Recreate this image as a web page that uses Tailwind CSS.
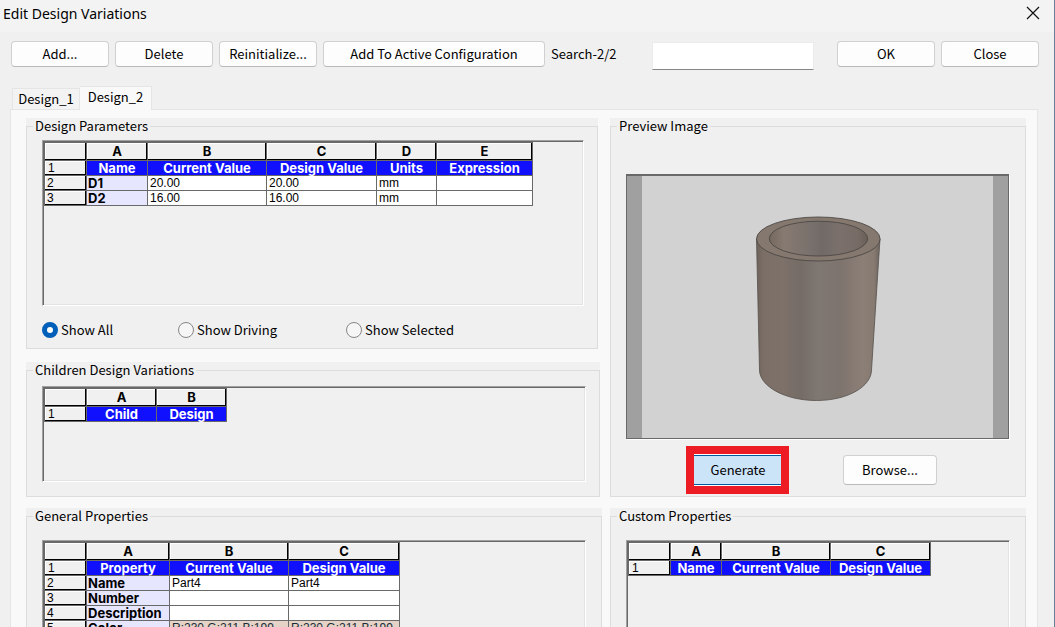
<!DOCTYPE html>
<html lang="en">
<head>
  <meta charset="UTF-8">
  <meta name="viewport" content="width=device-width, initial-scale=1.0">
  <title>Edit Design Variations</title>
  <script src="https://cdn.jsdelivr.net/npm/@tailwindcss/browser@4"></script>
</head>
<body class="bg-[#f0f0f0] text-black font-['Noto_Sans_CJK_JP',sans-serif] text-[13px] leading-4">
<div class="h-screen overflow-hidden border-r border-[#6b7f99]">

  <!-- Title bar -->
  <header class="flex items-start justify-between h-8 pl-[3px] pr-[14px] bg-[#f3f3f3]">
    <h1 class="font-['Noto_Sans',sans-serif] text-sm leading-7">Edit Design Variations</h1>
    <button type="button" aria-label="Close window" class="mt-[6px]">
      <svg class="size-[14px]" viewBox="0 0 14 14" fill="none" stroke="#111" stroke-width="1.2">
        <path d="M1 1l12 12M13 1L1 13" />
      </svg>
    </button>
  </header>

  <!-- Toolbar -->
  <div class="flex items-start gap-[6px] pt-[9px] pl-[11px] pr-[15px] mb-4">
    <button type="button" class="w-[98px] h-[26px] rounded border border-[#d0d0d0] border-b-[#bababa] bg-[#fdfdfd]">Add...</button>
    <button type="button" class="w-[98px] h-[26px] rounded border border-[#d0d0d0] border-b-[#bababa] bg-[#fdfdfd]">Delete</button>
    <button type="button" class="w-[98px] h-[26px] rounded border border-[#d0d0d0] border-b-[#bababa] bg-[#fdfdfd]">Reinitialize...</button>
    <button type="button" class="w-[222px] h-[26px] rounded border border-[#d0d0d0] border-b-[#bababa] bg-[#fdfdfd]">Add To Active Configuration</button>
    <label for="search" class="leading-[26px]">Search-2/2</label>
    <div class="ml-auto flex gap-[6px]">
      <input id="search" type="text" class="w-[162px] h-7 mt-px mr-[17px] px-1 bg-white border border-[#ebebeb] border-b-[#868686] outline-none">
      <button type="button" class="w-[98px] h-[26px] rounded border border-[#d0d0d0] border-b-[#bababa] bg-[#fdfdfd]">OK</button>
      <button type="button" class="w-[98px] h-[26px] rounded border border-[#d0d0d0] border-b-[#bababa] bg-[#fdfdfd]">Close</button>
    </div>
  </div>

  <!-- Tabs -->
  <div role="tablist" class="flex items-end h-6 -mb-px ml-3 relative">
    <button type="button" role="tab" aria-selected="false" class="w-[68px] h-[21px] mb-px border border-b-0 border-[#e5e5e5] bg-[#f3f3f3]">Design_1</button>
    <button type="button" role="tab" aria-selected="true" class="w-[72px] h-6 pb-[3px] border border-b-0 border-l-0 border-[#e5e5e5] bg-[#f9f9f9]">Design_2</button>
  </div>

  <main class="ml-[10px] mr-4 pt-2 pl-[15px] pr-[11px] border border-[#e5e5e5] bg-[#f9f9f9]">
    <div class="grid grid-cols-[576fr_416fr] gap-x-2 gap-y-[11px]">

      <div class="flex flex-col gap-[13px]">
        <section class="bg-[#f0f0f0] mr-1">
          <fieldset class="min-w-0 border border-[#dcdcdc] pl-[15px] pr-[13px] pt-[6px] pb-[10px]">
            <legend class="-ml-[9px] px-[2px]">Design Parameters</legend>
            <div class="h-[166px] p-px border border-t-[#a0a0a0] border-l-[#a0a0a0] border-r-white border-b-white shadow-[inset_1px_1px_0_#696969,inset_-1px_-1px_0_#e3e3e3]">
              <table class="table-fixed w-[489px] border-separate border-spacing-0 border-t border-l border-[#696969] font-['Liberation_Sans',sans-serif] text-xs leading-[14px]">
                <colgroup>
                  <col class="w-[42px]"><col class="w-[61px]"><col class="w-[119px]"><col class="w-[110px]"><col class="w-[60px]"><col class="w-[96px]">
                </colgroup>
                <thead class="font-['Inter',sans-serif] text-[13px] [&_th]:h-[18px] [&_th]:pb-[2px] [&_th]:border-r [&_th]:border-b [&_th]:border-[#696969] [&_th]:shadow-[inset_-1px_-1px_0_#000,inset_1px_1px_0_#fff]">
                  <tr><th></th><th>A</th><th>B</th><th>C</th><th>D</th><th>E</th></tr>
                </thead>
                <tbody class="[&_td]:h-[15px] [&_td]:border-r [&_td]:border-b [&_td]:border-[#696969] [&_td]:bg-white [&_td]:pl-[2px] [&_th]:h-[15px] [&_th]:border-r [&_th]:border-b [&_th]:border-[#696969]">
                  <tr class="font-['Inter',sans-serif] text-[13px] font-bold text-white text-center">
                    <th class="pl-[3px] text-left font-['Liberation_Sans',sans-serif] text-xs leading-[14px] font-normal text-black shadow-[inset_-1px_-1px_0_#000,inset_1px_1px_0_#fff]">1</th>
                    <th class="bg-[#1010ff]">Name</th><th class="bg-[#1010ff]">Current Value</th><th class="bg-[#1010ff]">Design Value</th><th class="bg-[#1010ff]">Units</th><th class="bg-[#1010ff]">Expression</th>
                  </tr>
                  <tr>
                    <th class="pl-[2px] text-left font-normal shadow-[inset_-1px_-1px_0_#000,inset_1px_1px_0_#fff]">2</th>
                    <th class="pl-px text-left font-['Inter',sans-serif] text-[13px] leading-[14px] bg-[#e6e6ff]">D1</th><td>20.00</td><td>20.00</td><td>mm</td><td></td>
                  </tr>
                  <tr>
                    <th class="pl-[2px] text-left font-normal shadow-[inset_-1px_-1px_0_#000,inset_1px_1px_0_#fff]">3</th>
                    <th class="pl-px text-left font-['Inter',sans-serif] text-[13px] leading-[14px] bg-[#e6e6ff]">D2</th><td>16.00</td><td>16.00</td><td>mm</td><td></td>
                  </tr>
                </tbody>
              </table>
            </div>
            <div class="flex mt-4">
              <label class="flex gap-[3px] w-[136px]">
                <input type="radio" name="show" checked class="appearance-none size-4 rounded-full border border-[#868686] bg-[#f6f6f6] checked:border-[5px] checked:border-[#005fb8] checked:bg-white">Show All
              </label>
              <label class="flex gap-[3px] w-[168px]">
                <input type="radio" name="show" class="appearance-none size-4 rounded-full border border-[#868686] bg-[#f6f6f6] checked:border-[5px] checked:border-[#005fb8] checked:bg-white">Show Driving
              </label>
              <label class="flex gap-[3px]">
                <input type="radio" name="show" class="appearance-none size-4 rounded-full border border-[#868686] bg-[#f6f6f6] checked:border-[5px] checked:border-[#005fb8] checked:bg-white">Show Selected
              </label>
            </div>
          </fieldset>
        </section>

        <section class="bg-[#f0f0f0] mr-[2px]">
          <fieldset class="min-w-0 border border-[#dcdcdc] pl-[15px] pr-[13px] pt-2 pb-[14px]">
            <legend class="-ml-[9px] px-[2px]">Children Design Variations</legend>
            <div class="h-24 p-px border border-t-[#a0a0a0] border-l-[#a0a0a0] border-r-white border-b-white shadow-[inset_1px_1px_0_#696969,inset_-1px_-1px_0_#e3e3e3]">
              <table class="table-fixed w-[183px] border-separate border-spacing-0 border-t border-l border-[#696969] font-['Liberation_Sans',sans-serif] text-xs leading-[14px]">
                <colgroup>
                  <col class="w-[42px]"><col class="w-[70px]"><col class="w-[70px]">
                </colgroup>
                <thead class="font-['Inter',sans-serif] text-[13px] [&_th]:h-[18px] [&_th]:pb-[2px] [&_th]:border-r [&_th]:border-b [&_th]:border-[#696969] [&_th]:shadow-[inset_-1px_-1px_0_#000,inset_1px_1px_0_#fff]">
                  <tr><th></th><th>A</th><th>B</th></tr>
                </thead>
                <tbody class="[&_th]:h-[15px] [&_th]:border-r [&_th]:border-b [&_th]:border-[#696969]">
                  <tr class="font-['Inter',sans-serif] text-[13px] font-bold text-white text-center">
                    <th class="pl-[3px] text-left font-['Liberation_Sans',sans-serif] text-xs leading-[14px] font-normal text-black shadow-[inset_-1px_-1px_0_#000,inset_1px_1px_0_#fff]">1</th>
                    <th class="bg-[#1010ff]">Child</th><th class="bg-[#1010ff]">Design</th>
                  </tr>
                </tbody>
              </table>
            </div>
          </fieldset>
        </section>
      </div>

      <section class="bg-[#f0f0f0]">
        <fieldset class="h-full min-w-0 border border-[#dcdcdc] pl-[15px] pr-4 pt-10">
          <legend class="-ml-[9px] px-[2px]">Preview Image</legend>
          <div class="flex h-[265px] border border-[#696969] border-t-2 bg-[#d2d2d2] shadow-[1px_1px_0_#fff]">
            <div class="w-[15px] bg-[#a0a0a0]"></div>
            <svg class="flex-1 min-w-0 h-full" viewBox="642 176 350 262">
              <defs>
                <linearGradient id="outer" x1="0" x2="1" y1="0" y2="0">
                  <stop offset="0" stop-color="#6e635c" />
                  <stop offset=".06" stop-color="#7b6f67" />
                  <stop offset=".22" stop-color="#7d7169" />
                  <stop offset=".36" stop-color="#756c67" />
                  <stop offset=".5" stop-color="#7e7772" />
                  <stop offset=".68" stop-color="#7e746e" />
                  <stop offset=".86" stop-color="#8c7f76" />
                  <stop offset=".95" stop-color="#867a71" />
                  <stop offset="1" stop-color="#6f655e" />
                </linearGradient>
                <linearGradient id="inner" x1="0" x2="1" y1="0" y2="0">
                  <stop offset="0" stop-color="#74685f" />
                  <stop offset=".15" stop-color="#877a71" />
                  <stop offset=".36" stop-color="#7c736d" />
                  <stop offset=".54" stop-color="#706a67" />
                  <stop offset=".7" stop-color="#7b706b" />
                  <stop offset=".9" stop-color="#766b65" />
                  <stop offset="1" stop-color="#6a5f58" />
                </linearGradient>
              </defs>
              <path d="M756 239L759 370C759 386 784 400.5 816 400.5S871 386 871 370L879.5 239Z" fill="url(#outer)" stroke="#55504c" stroke-width=".8" />
              <ellipse cx="817.8" cy="239" rx="61.8" ry="22" fill="#85786f" stroke="#4d4845" stroke-width=".9" />
              <ellipse cx="818" cy="238.6" rx="49.2" ry="17.4" fill="url(#inner)" stroke="#4d4845" stroke-width=".9" />
            </svg>
            <div class="w-[15px] bg-[#a0a0a0]"></div>
          </div>
          <div class="flex justify-center gap-[58px] mt-4 pr-[7px]">
            <div class="relative">
              <button type="button" class="block w-[94px] h-[30px] border border-[#005a9e] bg-[#cce4f7] shadow-[0_0_0_1px_#fff]">Generate</button>
              <!-- highlight around the button -->
              <span class="absolute -inset-y-[9px] -left-[5px] -right-1 border-8 border-[#ed1c24] pointer-events-none"></span>
            </div>
            <button type="button" class="w-[94px] h-[30px] rounded border border-[#d0d0d0] border-b-[#bababa] bg-[#fdfdfd]">Browse...</button>
          </div>
        </fieldset>
      </section>

      <section class="bg-[#f0f0f0]">
        <fieldset class="min-w-0 border border-[#dcdcdc] px-[15px] pt-4 pb-4">
          <legend class="-ml-[9px] px-[2px]">General Properties</legend>
          <div class="h-[200px] p-px border border-t-[#a0a0a0] border-l-[#a0a0a0] border-r-white border-b-white shadow-[inset_1px_1px_0_#696969,inset_-1px_-1px_0_#e3e3e3]">
            <table class="table-fixed w-[356px] border-separate border-spacing-0 border-t border-l border-[#696969] font-['Liberation_Sans',sans-serif] text-xs leading-[14px]">
              <colgroup>
                <col class="w-[42px]"><col class="w-[83px]"><col class="w-[119px]"><col class="w-[111px]">
              </colgroup>
              <thead class="font-['Inter',sans-serif] text-[13px] [&_th]:h-[18px] [&_th]:pb-[2px] [&_th]:border-r [&_th]:border-b [&_th]:border-[#696969] [&_th]:shadow-[inset_-1px_-1px_0_#000,inset_1px_1px_0_#fff]">
                <tr><th></th><th>A</th><th>B</th><th>C</th></tr>
              </thead>
              <tbody class="[&_td]:h-[15px] [&_td]:border-r [&_td]:border-b [&_td]:border-[#696969] [&_td]:pl-[2px] [&_th]:h-[15px] [&_th]:border-r [&_th]:border-b [&_th]:border-[#696969]">
                <tr class="font-['Inter',sans-serif] text-[13px] font-bold text-white text-center">
                  <th class="pl-[3px] text-left font-['Liberation_Sans',sans-serif] text-xs leading-[14px] font-normal text-black shadow-[inset_-1px_-1px_0_#000,inset_1px_1px_0_#fff]">1</th>
                  <th class="bg-[#1010ff]">Property</th><th class="bg-[#1010ff]">Current Value</th><th class="bg-[#1010ff]">Design Value</th>
                </tr>
                <tr>
                  <th class="pl-[2px] text-left font-normal shadow-[inset_-1px_-1px_0_#000,inset_1px_1px_0_#fff]">2</th>
                  <th class="pl-px text-left font-['Inter',sans-serif] text-[13px] leading-[14px] bg-[#e6e6ff]">Name</th><td class="bg-white">Part4</td><td class="bg-white">Part4</td>
                </tr>
                <tr>
                  <th class="pl-[2px] text-left font-normal shadow-[inset_-1px_-1px_0_#000,inset_1px_1px_0_#fff]">3</th>
                  <th class="pl-px text-left font-['Inter',sans-serif] text-[13px] leading-[14px] bg-[#e6e6ff]">Number</th><td class="bg-white"></td><td class="bg-white"></td>
                </tr>
                <tr>
                  <th class="pl-[2px] text-left font-normal shadow-[inset_-1px_-1px_0_#000,inset_1px_1px_0_#fff]">4</th>
                  <th class="pl-px text-left font-['Inter',sans-serif] text-[13px] leading-[14px] bg-[#e6e6ff]">Description</th><td class="bg-white"></td><td class="bg-white"></td>
                </tr>
                <tr>
                  <th class="pl-[2px] text-left font-normal shadow-[inset_-1px_-1px_0_#000,inset_1px_1px_0_#fff]">5</th>
                  <th class="pl-px text-left font-['Inter',sans-serif] text-[13px] leading-[14px] bg-[#e6e6ff]">Color</th><td class="bg-[#e6d3c7] text-[#192c38] whitespace-nowrap">R:230 G:211 B:199</td><td class="bg-[#e6d3c7] text-[#192c38] whitespace-nowrap">R:230 G:211 B:199</td>
                </tr>
              </tbody>
            </table>
          </div>
        </fieldset>
      </section>

      <section class="bg-[#f0f0f0]">
        <fieldset class="min-w-0 border border-[#dcdcdc] px-[15px] pt-4 pb-4">
          <legend class="-ml-[9px] px-[2px]">Custom Properties</legend>
          <div class="h-[200px] p-px border border-t-[#a0a0a0] border-l-[#a0a0a0] border-r-white border-b-white shadow-[inset_1px_1px_0_#696969,inset_-1px_-1px_0_#e3e3e3]">
            <table class="table-fixed w-[303px] border-separate border-spacing-0 border-t border-l border-[#696969] font-['Liberation_Sans',sans-serif] text-xs leading-[14px]">
              <colgroup>
                <col class="w-[42px]"><col class="w-[51px]"><col class="w-[109px]"><col class="w-[100px]">
              </colgroup>
              <thead class="font-['Inter',sans-serif] text-[13px] [&_th]:h-[18px] [&_th]:pb-[2px] [&_th]:border-r [&_th]:border-b [&_th]:border-[#696969] [&_th]:shadow-[inset_-1px_-1px_0_#000,inset_1px_1px_0_#fff]">
                <tr><th></th><th>A</th><th>B</th><th>C</th></tr>
              </thead>
              <tbody class="[&_th]:h-[15px] [&_th]:border-r [&_th]:border-b [&_th]:border-[#696969]">
                <tr class="font-['Inter',sans-serif] text-[13px] font-bold text-white text-center">
                  <th class="pl-[3px] text-left font-['Liberation_Sans',sans-serif] text-xs leading-[14px] font-normal text-black shadow-[inset_-1px_-1px_0_#000,inset_1px_1px_0_#fff]">1</th>
                  <th class="bg-[#1010ff]">Name</th><th class="bg-[#1010ff]">Current Value</th><th class="bg-[#1010ff]">Design Value</th>
                </tr>
              </tbody>
            </table>
          </div>
        </fieldset>
      </section>

    </div>
  </main>
</div>
</body>
</html>
